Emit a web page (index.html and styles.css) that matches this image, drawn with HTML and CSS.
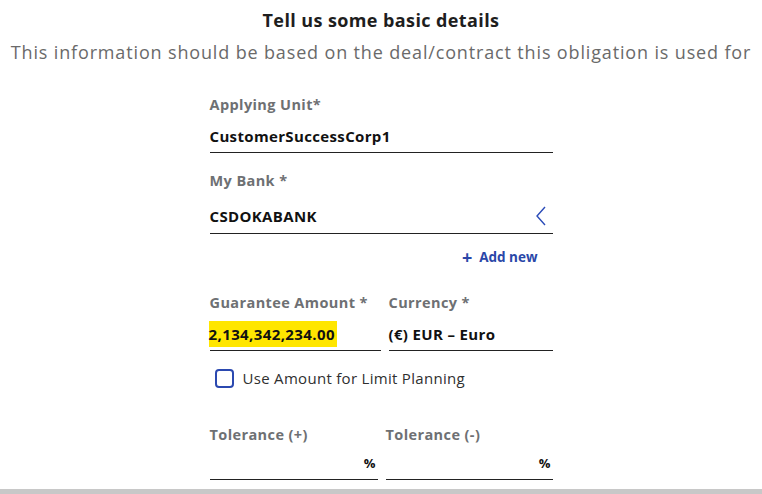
FILE: index.html
```html
<!DOCTYPE html>
<html>
<head>
<meta charset="utf-8">
<link rel="stylesheet" href="styles.css">
</head>
<body>
<div class="page">
  <h1 class="title">Tell us some basic details</h1>
  <p class="subtitle">This information should be based on the deal/contract this obligation is used for</p>
  <div class="form">
    <div class="field f1">
      <div class="label">Applying Unit*</div>
      <div class="input"><span class="value">CustomerSuccessCorp1</span></div>
    </div>
    <div class="field f2">
      <div class="label">My Bank *</div>
      <div class="input bank"><span class="value">CSDOKABANK</span>
        <svg class="chev" width="12" height="20" viewBox="0 0 12 20"><path d="M10 1 L2 10 L10 19" fill="none" stroke="#2a4bb8" stroke-width="1.4"/></svg>
      </div>
    </div>
    <div class="addrow"><span class="add"><span class="plus">+</span>Add new</span></div>
    <div class="row r1">
      <div class="field amt">
        <div class="label">Guarantee Amount *</div>
        <div class="input"><span class="value hl">2,134,342,234.00</span></div>
      </div>
      <div class="field cur">
        <div class="label">Currency *</div>
        <div class="input"><span class="value">(€) EUR – Euro</span></div>
      </div>
    </div>
    <label class="check"><span class="box"></span><span class="ctext">Use Amount for Limit Planning</span></label>
    <div class="row r2">
      <div class="field tol">
        <div class="label">Tolerance (+)</div>
        <div class="input pct"><span class="value">%</span></div>
      </div>
      <div class="field tol">
        <div class="label">Tolerance (-)</div>
        <div class="input pct"><span class="value">%</span></div>
      </div>
    </div>
  </div>
  <div class="bottombar"></div>
</div>
</body>
</html>
```
FILE: styles.css
```css
html, body { margin: 0; padding: 0; background: #fff; }
body { font-family: "Open Sans", sans-serif; width: 762px; height: 494px; overflow: hidden; }
.page { position: relative; height: 494px; display: flex; flex-direction: column; align-items: center; }
.title { margin: 9px 0 0; font-size: 18px; font-weight: 700; color: #1e1e1e; line-height: 22px; letter-spacing: 0.4px; }
.subtitle { margin: 9px 0 0; font-size: 18px; color: #6a6a6a; line-height: 24px; white-space: nowrap; letter-spacing: 0.85px; }
.form { width: 343px; margin-top: 32px; display: flex; flex-direction: column; }
.label { font-size: 14.5px; font-weight: 700; color: #6e7073; line-height: 18px; letter-spacing: 0.4px; }
.input { border-bottom: 1.5px solid #222; box-sizing: border-box; display: flex; align-items: center; justify-content: space-between; }
.value { font-size: 15px; font-weight: 700; color: #111; line-height: 18px; letter-spacing: 0.35px; }
.f1 .input { height: 39px; padding-top: 6px; }
.f2 { margin-top: 19px; }
.f2 .input { height: 44px; padding-top: 8px; }
.chev { margin-right: 6px; }
.addrow { display: flex; justify-content: flex-end; margin-top: 14px; padding-right: 15px; }
.add { color: #2a47a8; font-size: 13.5px; font-weight: 700; display: flex; align-items: center; line-height: 18px; }
.plus { font-size: 18px; font-weight: 700; margin-right: 7px; line-height: 14px; }
.row { display: flex; gap: 8px; }
.r1 { margin-top: 28px; }
.r1 .input { height: 39px; padding-top: 6px; }
.amt { width: 171px; }
.cur { width: 164px; }
.hl { background: #ffe600; padding: 4px 2px 4px 0; margin-left: -1px; letter-spacing: 0.4px; }
.check { display: flex; align-items: center; margin-top: 17px; margin-left: 5px; }
.box { border: 2px solid #2b49b0; border-radius: 4px; box-sizing: border-box; width: 19px; height: 19px; }
.ctext { font-size: 15px; color: #2f2f2f; margin-left: 9px; letter-spacing: 0.3px; }
.r2 { margin-top: 38px; gap: 8px; }
.tol { width: 168px; }
.tol:last-child { width: 167px; }
.r2 .input { height: 36px; justify-content: flex-end; padding-top: 2px; }
.pct .value { font-size: 13px; margin-right: 2px; letter-spacing: 0; }
.bottombar { position: absolute; left: 0; right: 0; bottom: 0; height: 5px; background: #c8c8c8; }
```
